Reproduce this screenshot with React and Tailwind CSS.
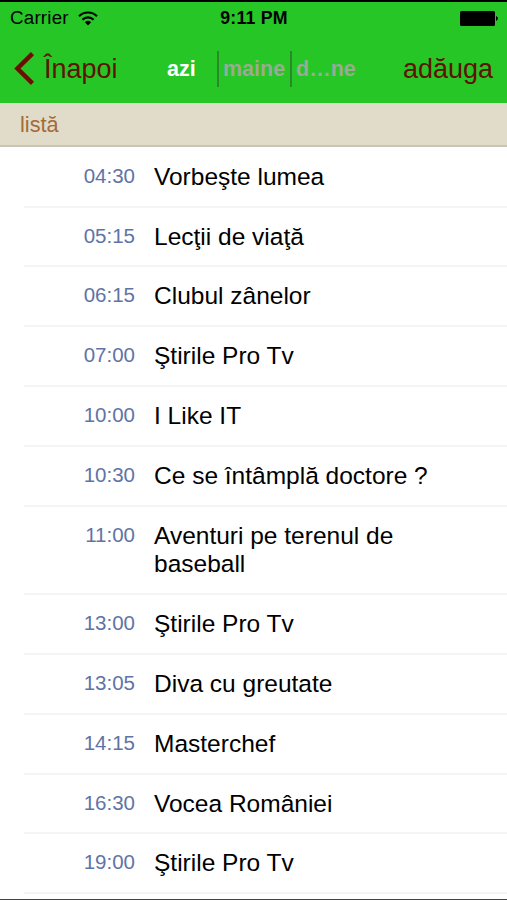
import { useState } from 'react';

const days = [
    { label: 'azi', className: 'w-[50px]' },
    { label: 'maine', className: 'w-[73px]' },
    { label: 'd…ne', className: 'w-[72px]' },
];

const shows = [
    { time: '04:30', title: 'Vorbeşte lumea' },
    { time: '05:15', title: 'Lecţii de viaţă' },
    { time: '06:15', title: 'Clubul zânelor' },
    { time: '07:00', title: 'Ştirile Pro Tv' },
    { time: '10:00', title: 'I Like IT' },
    { time: '10:30', title: 'Ce se întâmplă doctore ?' },
    { time: '11:00', title: 'Aventuri pe terenul de baseball' },
    { time: '13:00', title: 'Ştirile Pro Tv' },
    { time: '13:05', title: 'Diva cu greutate' },
    { time: '14:15', title: 'Masterchef' },
    { time: '16:30', title: 'Vocea României' },
    { time: '19:00', title: 'Ştirile Pro Tv' },
];

const StatusBar = () => (
    <div className="grid grid-cols-3 items-center h-[33px] pl-[10px] pr-[9px] text-black">
        <div className="flex items-center gap-[9px]">
            <span className="text-[18.8px] leading-none tracking-[0.2px]">Carrier</span>
            <svg width="20" height="15" viewBox="0 0 20 15" fill="none" stroke="currentColor" strokeWidth="2.1">
                <path d="M1 5.2a12.8 12.8 0 0 1 18 0" />
                <path d="M4.4 8.7a8 8 0 0 1 11.2 0" />
                <path d="M10 14.4 6.9 11.2a4.5 4.5 0 0 1 6.2 0z" fill="currentColor" stroke="none" />
            </svg>
        </div>
        <span className="text-center text-[17.8px] leading-none tracking-[0.2px] font-bold">9:11 PM</span>
        <svg className="justify-self-end" width="38" height="15" viewBox="0 0 38 15" fill="currentColor">
            <rect x="0" y="0" width="35" height="15" rx="1.5" />
            <path d="M36 5a2.6 2.6 0 0 1 0 5z" />
        </svg>
    </div>
);

const NavBar = ({ day, onDayChange }) => (
    <div className="flex items-center h-[67px] pl-[14px] pr-[14px] text-[#5f1200]">
        <button className="flex items-center gap-[9px] w-[153px] text-[27px] leading-none">
            <svg width="21" height="33" viewBox="0 0 21 33" fill="none" stroke="#6d0d00" strokeWidth="4.4">
                <path d="M18.5 1.6 3.4 16.5l15.1 14.9" />
            </svg>
            <span className="pt-px">Înapoi</span>
        </button>

        <div className="flex items-center text-[21.5px] font-bold">
            {days.map((item, i) => (
                <button
                    key={item.label}
                    onClick={() => onDayChange(i)}
                    className={`${item.className} h-9 pt-[2px] text-left whitespace-nowrap leading-none ${i > 0 ? 'border-l-2 border-[#2a8a2a] pl-[4px]' : ''} ${day === i ? 'text-white' : 'text-[#9aab94]'}`}
                >
                    {item.label}
                </button>
            ))}
        </div>

        <button className="ml-auto pt-px text-[27px] leading-none">adăuga</button>
    </div>
);

const App = () => {
    const [day, setDay] = useState(0);

    return (
        <div className="flex flex-col h-[900px] overflow-hidden bg-white border-t-2 border-t-black border-b border-b-[#444] font-['Liberation_Sans',Arial,sans-serif]">
            <header className="shrink-0 h-[101px] bg-[#27c627]">
                <StatusBar />
                <NavBar day={day} onDayChange={setDay} />
            </header>

            <div className="shrink-0 flex items-center h-11 pt-[2px] pl-5 bg-[#e0dcc9] border-b-2 border-[#c9c5b5] text-[21.7px] leading-none text-[#a56a3a]">
                listă
            </div>

            <ul className="pt-[0.7px] pl-6">
                {shows.map((show) => (
                    <li
                        key={show.time}
                        className="flex pt-[15px] pb-[14.9px] border-b-2 border-[#f4f4f4]"
                    >
                        <span className="w-[111px] shrink-0 text-right text-[20.5px] leading-[26px] text-[#5f74a6]">
                            {show.time}
                        </span>
                        <span className="ml-[19px] w-[290px] text-[24.5px] leading-[28px] text-black">
                            {show.title}
                        </span>
                    </li>
                ))}
            </ul>
        </div>
    );
};

export default App;
